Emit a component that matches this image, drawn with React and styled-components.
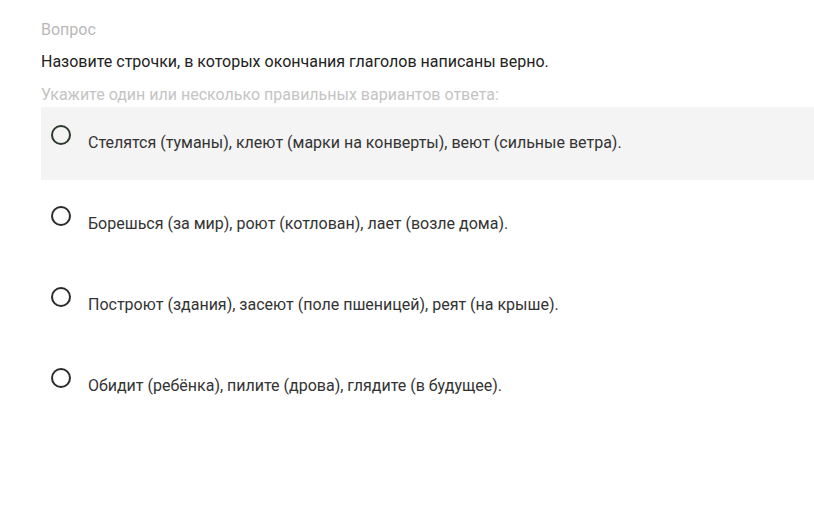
import React from "react";
import styled, { createGlobalStyle } from "styled-components";

const Global = createGlobalStyle`
  html, body { margin: 0; padding: 0; background: #fff; }
  body { font-family: Roboto, "Noto Sans", sans-serif; }
`;

const Page = styled.div`
  padding: 21px 0 0 41px;
`;

const Label = styled.div`
  font-size: 16px;
  line-height: 18px;
  color: ${(p) => p.$color};
  margin-bottom: ${(p) => p.$mb}px;
`;

const List = styled.div`
  display: flex;
  flex-direction: column;
  gap: 8px;
`;

const Option = styled.label`
  display: flex;
  align-items: flex-start;
  height: 73px;
  box-sizing: border-box;
  padding: 18px 0 0 10px;
  background: ${(p) => (p.$active ? "#f4f4f4" : "transparent")};
  cursor: pointer;
`;

const Radio = styled.span`
  width: 20px;
  height: 20px;
  box-sizing: border-box;
  border-radius: 50%;
  border: 2px solid ${(p) => (p.$active ? "#2c3a2e" : "#2b2b2b")};
  flex: none;
  margin-right: 17px;
`;

const OptionText = styled.span`
  font-size: 16px;
  line-height: 18px;
  color: #333;
  margin-top: 9px;
`;

const options = [
  "Стелятся (туманы), клеют (марки на конверты), веют (сильные ветра).",
  "Борешься (за мир), роют (котлован), лает (возле дома).",
  "Построют (здания), засеют (поле пшеницей), реят (на крыше).",
  "Обидит (ребёнка), пилите (дрова), глядите (в будущее).",
];

export default function App() {
  return (
    <>
      <Global />
      <Page>
        <Label $color="#b8b8b8" $mb={14}>Вопрос</Label>
        <Label $color="#222" $mb={15}>Назовите строчки, в которых окончания глаголов написаны верно.</Label>
        <Label $color="#c4c4c4" $mb={3}>Укажите один или несколько правильных вариантов ответа:</Label>
        <List>
          {options.map((t, i) => (
            <Option key={i} $active={i === 0}>
              <Radio $active={i === 0} />
              <OptionText>{t}</OptionText>
            </Option>
          ))}
        </List>
      </Page>
    </>
  );
}
